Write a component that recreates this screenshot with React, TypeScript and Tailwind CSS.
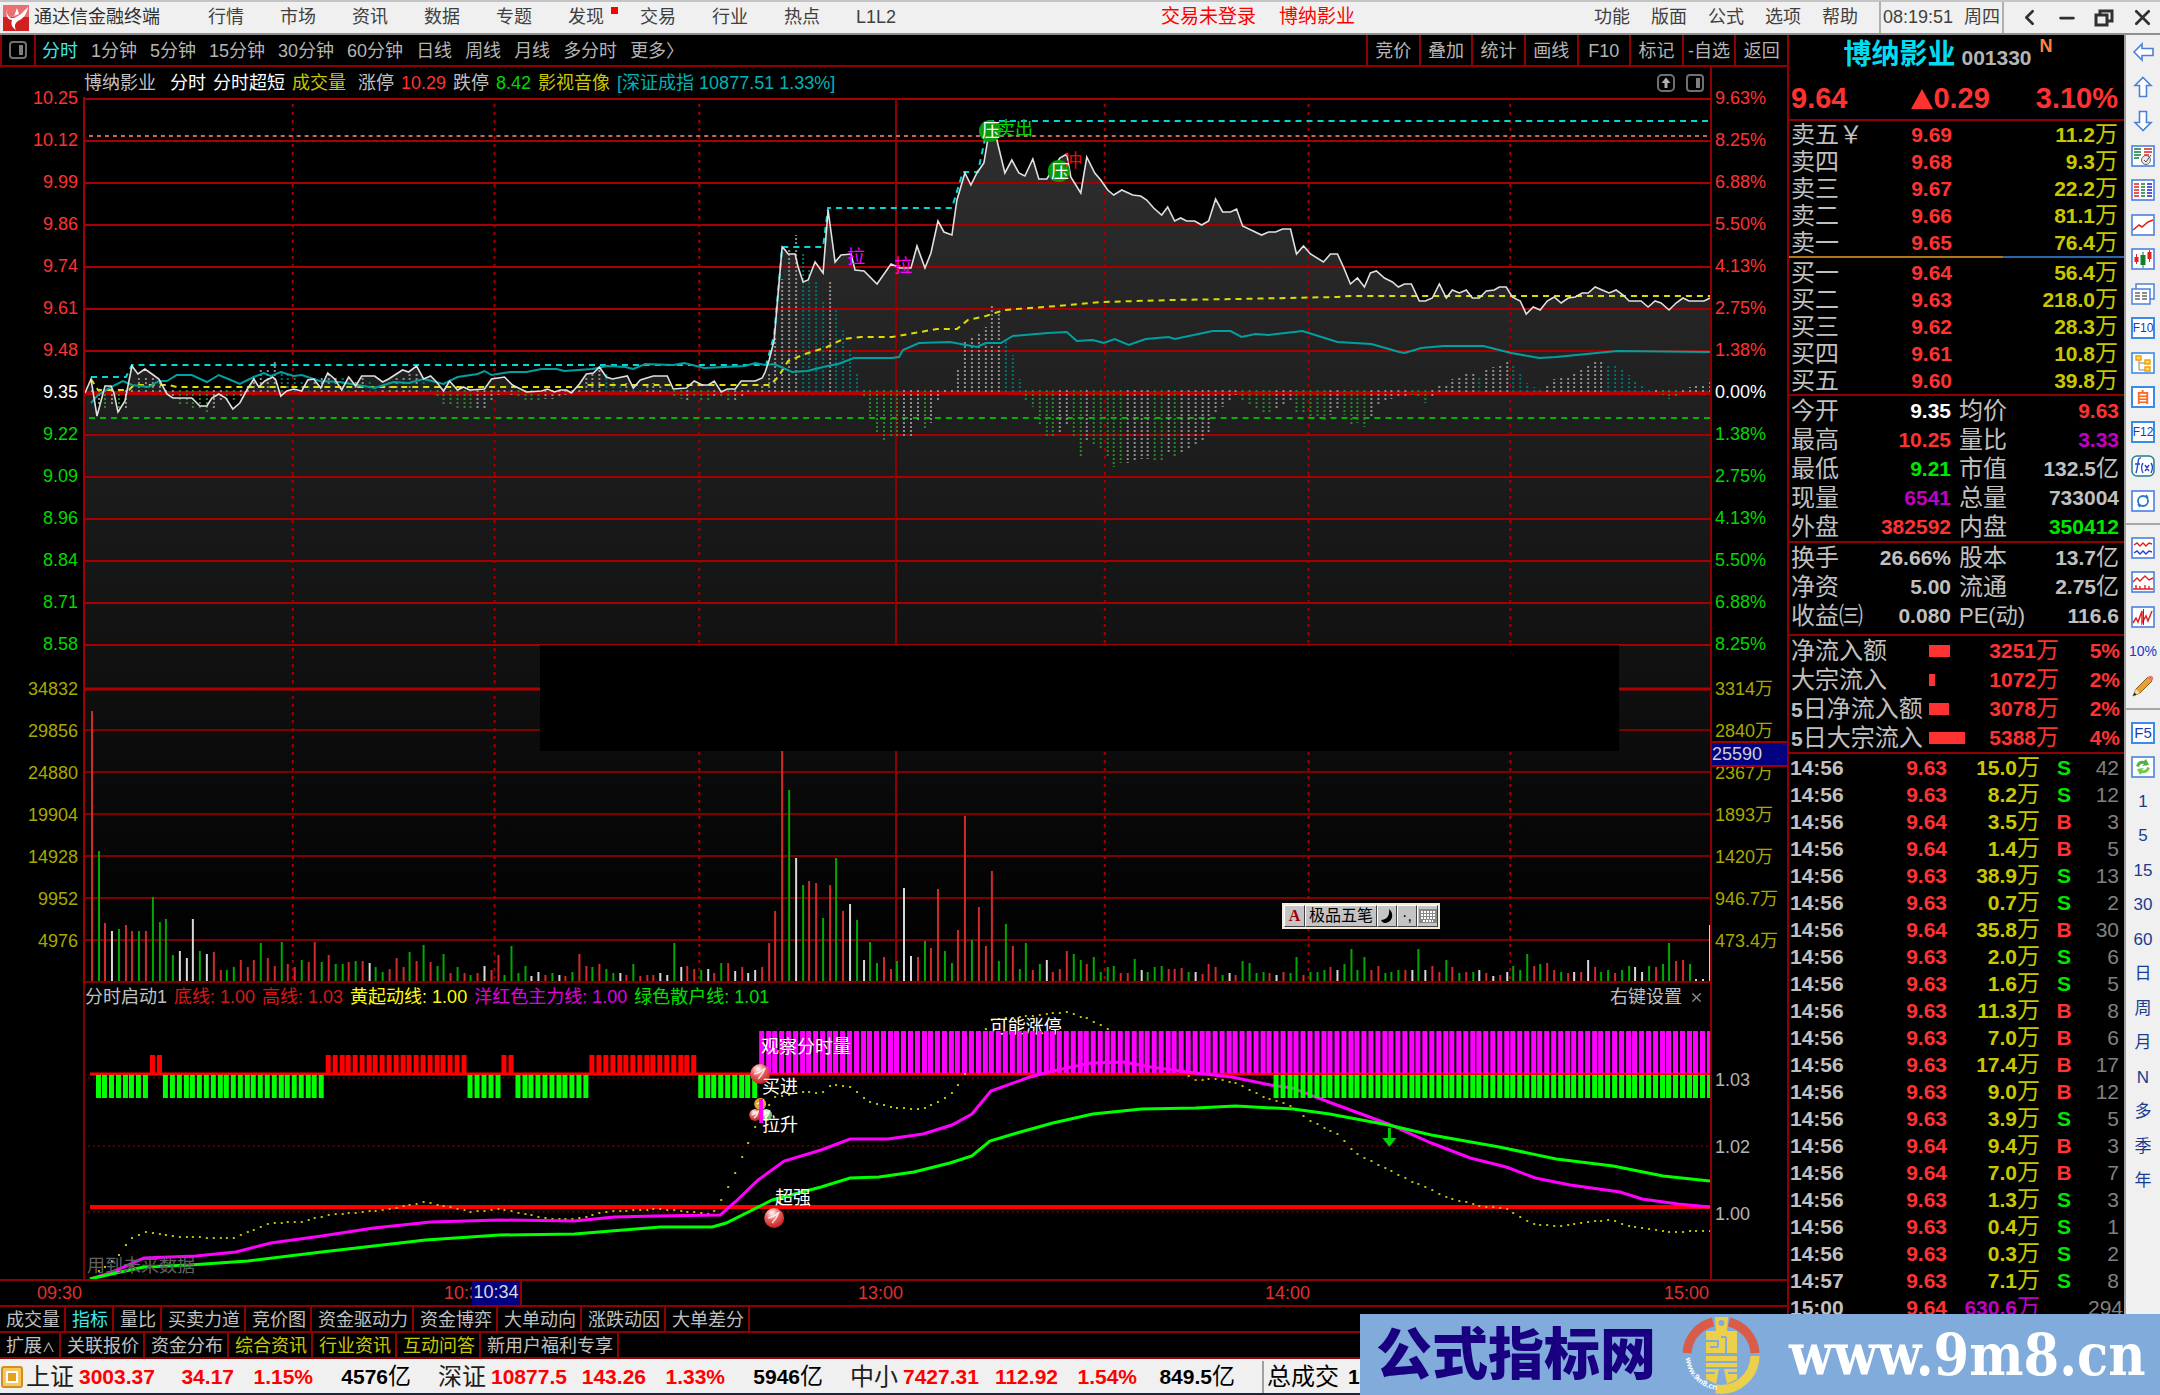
import React from "react";
import { ChevronLeft, Minus, X } from "lucide-react";
import clsx from "clsx";

const menuItems = ["行情", "市场", "资讯", "数据", "专题", "发现", "交易", "行业", "热点", "L1L2"];
const sysItems = ["功能", "版面", "公式", "选项", "帮助"];
const periods = ["分时", "1分钟", "5分钟", "15分钟", "30分钟", "60分钟", "日线", "周线", "月线", "多分时", "更多〉"];
const tools = ["竞价", "叠加", "统计", "画线", "F10", "标记", "-自选", "返回"];

const priceLabels = ["10.25", "10.12", "9.99", "9.86", "9.74", "9.61", "9.48", "9.35", "9.22", "9.09", "8.96", "8.84", "8.71", "8.58"];
const percentLabels = ["9.63%", "8.25%", "6.88%", "5.50%", "4.13%", "2.75%", "1.38%", "0.00%", "1.38%", "2.75%", "4.13%", "5.50%", "6.88%", "8.25%"];
const volumeLabels = ["34832", "29856", "24880", "19904", "14928", "9952", "4976"];
const amountLabels = ["3314万", "2840万", "2367万", "1893万", "1420万", "946.7万", "473.4万"];

const tabs = ["成交量", "指标", "量比", "买卖力道", "竞价图", "资金驱动力", "资金博弈", "大单动向", "涨跌动因", "大单差分"];
const newsTabs = ["扩展∧", "关联报价", "资金分布", "综合资讯", "行业资讯", "互动问答", "新用户福利专享"];

const sells = [["卖五￥", "9.69", "11.2万"], ["卖四", "9.68", "9.3万"], ["卖三", "9.67", "22.2万"], ["卖二", "9.66", "81.1万"], ["卖一", "9.65", "76.4万"]];
const buys = [["买一", "9.64", "56.4万"], ["买二", "9.63", "218.0万"], ["买三", "9.62", "28.3万"], ["买四", "9.61", "10.8万"], ["买五", "9.60", "39.8万"]];

const RED = "text-[#ff3232]";
const GREEN = "text-[#00e600]";
const WHITE = "text-white";
const GRAY = "text-[#c0c0c0]";
const PURPLE = "text-[#c000c0]";

const stats = [
  ["今开", "9.35", WHITE, "均价", "9.63", RED],
  ["最高", "10.25", RED, "量比", "3.33", PURPLE],
  ["最低", "9.21", GREEN, "市值", "132.5亿", GRAY],
  ["现量", "6541", PURPLE, "总量", "733004", GRAY],
  ["外盘", "382592", RED, "内盘", "350412", GREEN],
];
const basics = [
  ["换手", "26.66%", GRAY, "股本", "13.7亿", GRAY],
  ["净资", "5.00", GRAY, "流通", "2.75亿", GRAY],
  ["收益㈢", "0.080", GRAY, "PE(动)", "116.6", GRAY],
];
const flows: [string, number, string, string][] = [
  ["净流入额", 21, "3251万", "5%"],
  ["大宗流入", 6, "1072万", "2%"],
  ["5日净流入额", 20, "3078万", "2%"],
  ["5日大宗流入", 36, "5388万", "4%"],
];
const ticks = [
  ["14:56", "9.63", "15.0万", "S", "42"],
  ["14:56", "9.63", "8.2万", "S", "12"],
  ["14:56", "9.64", "3.5万", "B", "3"],
  ["14:56", "9.64", "1.4万", "B", "5"],
  ["14:56", "9.63", "38.9万", "S", "13"],
  ["14:56", "9.63", "0.7万", "S", "2"],
  ["14:56", "9.64", "35.8万", "B", "30"],
  ["14:56", "9.63", "2.0万", "S", "6"],
  ["14:56", "9.63", "1.6万", "S", "5"],
  ["14:56", "9.63", "11.3万", "B", "8"],
  ["14:56", "9.63", "7.0万", "B", "6"],
  ["14:56", "9.63", "17.4万", "B", "17"],
  ["14:56", "9.63", "9.0万", "B", "12"],
  ["14:56", "9.63", "3.9万", "S", "5"],
  ["14:56", "9.64", "9.4万", "B", "3"],
  ["14:56", "9.64", "7.0万", "B", "7"],
  ["14:56", "9.63", "1.3万", "S", "3"],
  ["14:56", "9.63", "0.4万", "S", "1"],
  ["14:56", "9.63", "0.3万", "S", "2"],
  ["14:57", "9.63", "7.1万", "S", "8"],
  ["15:00", "9.64", "630.6万", "", "294"],
];

const indexes = [
  ["上证", "3003.37", "34.17", "1.15%", "4576亿"],
  ["深证", "10877.5", "143.26", "1.33%", "5946亿"],
  ["中小", "7427.31", "112.92", "1.54%", "849.5亿"],
];

// Intraday series, in plot units (x: 84..1711 for the trading day)
const priceLine =
  "84,393 90,379 96,416 104,386 110,386 113,393 117,412 124,401 131,366 137,374 144,369 151,374 158,379 166,394 172,398 191,398 199,406 206,406 211,398 218,394 225,398 232,409 239,403 246,390 253,379 258,387 264,381 272,377 275,380 280,396 286,391 293,389 301,391 307,380 313,379 320,388 327,373 334,379 341,390 348,377 355,386 361,376 374,376 382,382 388,379 402,370 408,372 416,366 423,379 430,376 436,382 443,391 449,381 457,390 463,387 469,390 484,389 491,379 504,377 512,385 526,392 541,391 547,389 554,392 560,390 566,390 571,393 579,384 586,374 593,373 599,367 606,377 612,379 627,376 633,388 640,380 653,376 667,376 673,389 686,388 694,381 702,385 708,385 714,381 721,392 727,389 735,389 741,381 755,381 762,378 765,372 769,360 774,340 778,293 782,247 785,250 788,254 795,254 798,267 803,282 808,280 815,262 823,273 828,210 835,262 841,255 851,254 855,270 864,271 877,284 891,264 900,268 911,268 917,246 925,268 931,253 938,221 944,232 952,235 957,200 965,173 971,185 977,173 984,163 989,133 993,123 997,140 1005,173 1012,160 1019,173 1025,176 1033,159 1039,179 1047,179 1060,158 1067,154 1071,177 1081,193 1087,157 1095,173 1101,180 1108,190 1114,195 1122,190 1133,195 1141,196 1147,200 1154,208 1162,215 1168,207 1175,221 1181,218 1187,221 1195,221 1202,225 1209,221 1216,199 1223,212 1231,212 1237,209 1243,226 1262,235 1269,232 1276,232 1283,229 1291,229 1297,254 1304,246 1311,254 1324,262 1331,254 1338,254 1344,267 1351,284 1358,278 1365,287 1371,273 1377,271 1385,278 1393,282 1399,287 1405,284 1412,284 1420,301 1426,301 1433,298 1440,284 1447,298 1453,290 1460,293 1467,290 1473,298 1480,298 1487,291 1495,290 1500,287 1507,287 1513,297 1521,301 1527,314 1534,307 1541,310 1548,301 1555,297 1562,303 1569,298 1576,297 1583,293 1589,293 1596,287 1603,290 1610,293 1617,290 1624,295 1630,301 1642,301 1649,307 1656,301 1662,303 1670,310 1677,303 1684,298 1690,301 1705,301 1711,298";
const indexLine =
  "90,403 97,395 110,387 122,381 131,385 148,387 158,381 166,381 176,375 191,375 206,382 218,375 230,380 239,384 253,377 263,373 270,376 280,372 293,376 301,375 319,381 339,382 357,385 374,388 393,382 408,383 423,379 443,384 457,377 477,374 484,371 491,375 510,372 526,372 541,369 556,369 564,371 592,369 607,366 625,367 633,369 645,364 673,365 684,363 704,368 745,366 755,363 765,365 774,364 783,368 792,372 807,371 823,367 838,364 854,358 892,358 899,357 903,350 919,343 950,342 977,347 986,343 1001,343 1013,336 1048,333 1067,332 1077,341 1093,340 1104,343 1115,339 1129,345 1146,339 1169,337 1175,339 1213,331 1231,331 1242,337 1256,334 1269,335 1303,331 1338,342 1372,344 1400,352 1405,353 1422,348 1444,346 1484,346 1512,353 1540,358 1557,357 1618,351 1711,352";
const highLine = "90,377 125,377 131,365 766,365 774,335 782,247 823,247 828,208 952,208 963,172 978,172 989,121 1711,121";
const averageLine =
  "90,379 97,390 128,390 133,385 168,385 176,387 582,387 587,385 770,385 778,377 788,361 805,354 827,347 843,339 861,337 892,337 937,329 957,329 968,320 986,316 1004,310 1057,306 1102,302 1173,300 1236,299 1338,297 1350,296 1711,296";

const mainForceLine =
  "89,1279 109,1273 123,1267 143,1258 195,1256 235,1252 270,1243 321,1236 373,1228 430,1222 499,1220 574,1221 614,1217 654,1216 720,1215 735,1202 758,1180 784,1161 821,1150 850,1139 888,1139 923,1134 952,1125 972,1114 991,1091 1030,1077 1053,1071 1091,1063 1124,1062 1151,1067 1196,1073 1232,1077 1271,1085 1293,1088 1332,1103 1389,1124 1432,1143 1471,1158 1507,1167 1536,1178 1571,1185 1621,1192 1643,1199 1679,1204 1711,1207";
const retailLine =
  "89,1279 115,1273 143,1267 189,1265 247,1261 321,1252 373,1246 425,1240 499,1235 574,1234 660,1227 712,1227 726,1223 772,1200 821,1187 850,1178 879,1177 914,1172 950,1163 972,1156 990,1141 1017,1133 1053,1123 1093,1114 1142,1109 1196,1108 1236,1106 1294,1109 1330,1114 1389,1125 1432,1135 1500,1147 1557,1159 1614,1166 1664,1176 1711,1181";
const startLine =
  "96,1273 117,1256 129,1239 144,1232 178,1237 232,1238 270,1223 299,1222 327,1215 385,1210 425,1202 471,1212 499,1209 551,1219 577,1219 603,1212 660,1209 712,1214 723,1197 735,1173 748,1143 758,1120 775,1097 804,1092 821,1093 832,1085 850,1087 870,1102 896,1108 923,1109 950,1096 964,1076 990,1020 1039,1015 1066,1012 1089,1019 1106,1028 1187,1075 1196,1080 1218,1079 1236,1083 1267,1098 1290,1105 1310,1120 1339,1135 1356,1153 1414,1182 1450,1198 1486,1207 1507,1208 1525,1220 1539,1225 1561,1226 1586,1222 1614,1220 1629,1226 1668,1232 1711,1231";

// One entry per minute: colour letter followed by the bar height
const volumes =
  "r270 g130 r58 w50 g52 r56 r50 g50 r50 g84 g59 g62 g26 w30 w23 w62 g30 w27 r29 r11 g11 g14 r21 r14 r21 g38 r23 r15 g39 r17 r14 g21 r19 r39 g19 r26 g17 g17 r19 g20 r20 w18 g14 g9 r12 r23 r14 g29 r20 g36 r19 g15 g27 r8 g14 r8 g6 r8 w15 r11 r26 g6 g35 g8 g15 w5 w9 r6 g8 w6 r5 g9 r27 r15 g14 r17 g12 g8 w8 r6 g17 r5 r6 r6 w8 w6 g38 w14 r15 r12 g11 w12 r8 g18 r18 w10 r14 w8 w11 r14 r38 r70 r262 g191 w123 g96 r100 r98 g63 r96 g123 r70 w77 g61 w21 g39 g18 r24 r12 g20 w93 w25 r24 g40 r33 r92 g30 g18 r51 r165 g41 r74 r35 r110 g20 g57 r35 g12 g38 r11 g17 w21 r9 r12 r30 g27 g21 r17 g24 g9 g14 g15 r8 r8 g22 w11 g9 g14 g15 r12 r12 r13 g9 w9 r7 r17 r14 g6 w8 r6 g20 g18 g8 g9 r8 w6 r9 g8 g24 r6 g9 g9 g11 r14 w11 g17 g32 g11 g24 r11 r15 g8 g9 g11 r11 w11 g32 w11 r15 r9 g21 r14 g8 r9 g9 w11 r8 w5 r6 w9 g15 g11 g27 r15 g17 r18 r11 g9 r8 w9 r9 w21 r14 g9 g11 r8 g11 g15 w14 w9 g15 r14 g17 g38 r20 r21 g17 w2 w2 w56".split(" ");

const momentum =
  "w2 w-12 g-16 w-12 g-20 w-18 w6 w15 w16 w14 w12 w3 w-4 g-12 g-14 g-16 g-18 g-22 w-16 w-8 g-8 g-10 w-4 w8 w14 w22 w24 w31 c21 c20 c16 c12 c8 w14 w16 w18 w16 c14 c10 w12 w14 c10 c6 w8 w12 w14 w16 w18 w20 c12 c4 g-6 g-14 g-14 g-18 g-18 g-18 w-17 w-16 w-10 w-3 w-2 w-3 g-6 g-8 g-9 g-8 w-7 w-7 w-4 w-3 w2 w6 w14 w18 w22 c18 c16 c8 w9 c5 c3 w6 w9 w8 c3 g-5 g-7 w-8 g-6 g-8 g-8 w-4 g-6 g-8 w-9 w-4 w-2 w3 w8 w18 w55 w113 w143 w157 c138 c122 c111 c91 w112 c84 c63 c43 c18 g-4 g-25 g-42 g-50 g-45 g-45 w-45 w-45 w-30 g-36 w-31 w-8 w-2 w-2 w23 w50 w55 w60 w65 w88 w80 c50 c37 c13 g-10 g-15 g-32 g-44 g-44 w-40 w-34 g-46 g-64 w-50 g-53 g-58 g-65 g-75 g-71 w-71 w-70 w-67 w-67 g-69 g-70 w-62 g-66 w-61 w-58 w-53 w-48 w-41 w-20 w-15 w-9 w-3 g-9 g-14 g-18 g-21 g-20 w-16 w-12 w-8 g-21 g-21 g-26 g-26 g-29 w-23 w-18 g-23 g-32 g-31 g-35 w-25 w-14 w-10 w-7 w-6 w-4 g-3 g-6 g-11 w-6 w7 w8 w13 w16 w18 w18 c16 w22 w25 w28 w30 c27 c20 c9 c5 c2 w7 w13 w14 w16 w20 w24 w26 w30 w30 c28 c26 c22 c17 c10 c8 c3 w-1 g-3 g-7 g-5 w3 w5 w6 w8 w10".split(" ");

const volumeColor: Record<string, string> = { r: "#d22a2a", g: "#00a800", w: "#d8d8d8" };
const momentumColor: Record<string, string> = { w: "#8c8c8c", g: "#2a862a", c: "#007070" };

const minuteX = (i: number) => Math.round(84 + i * 6.779);

// Signal strip: [first minute, last minute]
const redRuns = [[10, 11], [36, 56], [62, 63], [75, 90]];
const greenRuns = [[2, 9], [12, 35], [57, 61], [64, 74], [91, 99], [176, 240]];
const magentaRuns = [[100, 240]];

// Samples a polyline once per minute
function sample(points: string) {
  const pts = points.split(" ").map((p) => p.split(",").map(Number));
  const out: number[][] = [];
  for (let i = 2; i <= 240; i++) {
    const x = minuteX(i);
    const k = pts.findIndex((p) => p[0] >= x);
    if (k < 1) continue;
    const [x0, y0] = pts[k - 1];
    const [x1, y1] = pts[k];
    out.push([x, Math.round(y0 + ((y1 - y0) * (x - x0)) / (x1 - x0))]);
  }
  return out;
}

function Runs({ runs, y, h, color }: { runs: number[][]; y: number; h: number; color: string }) {
  return (
    <g fill={color}>
      {runs.flatMap(([from, to]) =>
        Array.from({ length: to - from + 1 }, (_, k) => (
          <rect key={from + k} x={minuteX(from + k) - 3} y={y} width={5} height={h} />
        ))
      )}
    </g>
  );
}

function PriceChart() {
  const rows = Array.from({ length: 14 }, (_, i) => 98 + i * 42);
  const volRows = Array.from({ length: 6 }, (_, i) => 730 + i * 42);
  return (
    <svg viewBox="84 97 1627 886" preserveAspectRatio="none" className="block h-[886px] w-full">
      <defs>
        <linearGradient id="area" gradientUnits="userSpaceOnUse" x1="0" y1="110" x2="0" y2="960">
          <stop offset="0" stopColor="#303030" />
          <stop offset="0.4" stopColor="#1d1d1d" />
          <stop offset="1" stopColor="#000" />
        </linearGradient>
      </defs>
      <path d={`M84,982 L${priceLine.replace(/ /g, " L")} L1711,982 Z`} fill="url(#area)" />
      <g stroke="#a80000" strokeWidth="2">
        {rows.map((y) => <path key={y} d={`M84,${y + 1}H1711`} />)}
      </g>
      <g stroke="#800000" strokeWidth="2">
        {volRows.map((y) => <path key={y} d={`M84,${y}H1711`} />)}
        <path d="M84,982H1711" />
        <path d="M896,98V982" stroke="#900000" />
      </g>
      <path d="M84,689H1711" stroke="#b00000" strokeWidth="3" />
      <g stroke="#a00000" strokeWidth="2" strokeDasharray="3 5">
        {[292, 494, 699, 1105, 1309, 1511].map((x) => <path key={x} d={`M${x},104V982`} />)}
      </g>
      <path d="M84,393H1711" stroke="#b80000" strokeWidth="4" />
      <path d="M88,136H1711" stroke="#c86464" strokeWidth="2" strokeDasharray="4 4" />
      <path d="M88,418H1711" stroke="#00b400" strokeWidth="2" strokeDasharray="6 5" />
      {momentum.map((m, i) => {
        const h = Number(m.slice(1));
        const x = minuteX(i + 1);
        return (
          <path key={i} d={h > 0 ? `M${x},392V${392 - h}` : `M${x},390V${392 - h}`} stroke={momentumColor[m[0]]} strokeWidth="2" strokeDasharray="2 2" />
        );
      })}
      {volumes.map((v, i) => (
        <path key={i} d={`M${minuteX(i + 1)},981V${981 - Number(v.slice(1))}`} stroke={volumeColor[v[0]]} strokeWidth="2" />
      ))}
      <g fill="none" strokeWidth="2">
        <polyline points={highLine} stroke="#00d8d8" strokeDasharray="6 5" />
        <polyline points={averageLine} stroke="#dcdc00" strokeDasharray="6 5" />
        <polyline points={indexLine} stroke="#00a0a0" />
        <polyline points={priceLine} stroke="#e0e0e0" strokeWidth="1.6" />
      </g>
      <circle cx="990" cy="131" r="11" fill="#0a9a0a" />
      <circle cx="1059" cy="171" r="11" fill="#0a9a0a" />
    </svg>
  );
}

function Ball({ cx, cy, r, fill }: { cx: number; cy: number; r: number; fill: string }) {
  return (
    <g>
      <circle cx={cx} cy={cy} r={r} fill={fill} />
      <path d={`M${cx - r * 0.6},${cy} Q${cx},${cy - 1} ${cx + r * 0.5},${cy - r * 0.6} Q${cx + 2},${cy + 1} ${cx - r * 0.2},${cy + r * 0.5}`} fill="none" stroke="#fff" strokeWidth="1.5" opacity="0.8" />
    </g>
  );
}

function SignalChart() {
  return (
    <svg viewBox="84 1010 1627 269" preserveAspectRatio="none" className="block h-[269px] w-full">
      <defs>
        <radialGradient id="ballRed" cx="0.4" cy="0.25" r="0.8">
          <stop offset="0" stopColor="#fff" />
          <stop offset="0.45" stopColor="#e86060" />
          <stop offset="1" stopColor="#c01818" />
        </radialGradient>
        <radialGradient id="ballGreen" cx="0.4" cy="0.25" r="0.8">
          <stop offset="0" stopColor="#fff" />
          <stop offset="1" stopColor="#3aa020" />
        </radialGradient>
      </defs>
      <g stroke="#a00000" strokeDasharray="2 3">
        <path d="M87,1078H1711M87,1146H1711M87,1212H1711" />
      </g>
      <path d="M89,1074H1711" stroke="#f00" strokeWidth="3" />
      <path d="M89,1207H1711" stroke="#f00" strokeWidth="4" />
      <g fill="#c0c000">
        {sample(startLine).map(([x, y]) => <rect key={x} x={x - 1} y={y - 1} width="2" height="2" />)}
      </g>
      <polyline points={mainForceLine} fill="none" stroke="#f0f" strokeWidth="3" />
      <text x="990" y="1033" fill="#fff" fontSize="18">可能涨停</text>
      <Runs runs={redRuns} y={1055} h={18} color="#f00" />
      <Runs runs={greenRuns} y={1075} h={23} color="#0f0" />
      <Runs runs={magentaRuns} y={1031} h={42} color="#f0f" />
      <polyline points={retailLine} fill="none" stroke="#0f0" strokeWidth="3" />
      <path d="M1390,1128V1140" stroke="#00d000" strokeWidth="3" />
      <path d="M1383,1138H1397L1390,1147Z" fill="#00d000" />
      <Ball cx={760} cy={1104} r={6} fill="#e0a830" />
      <Ball cx={755} cy={1115} r={6} fill="url(#ballRed)" />
      <Ball cx={766} cy={1115} r={6} fill="url(#ballGreen)" />
      <path d="M761,1099V1123" stroke="#f0f" strokeWidth="4" />
      <Ball cx={760} cy={1074} r={10} fill="url(#ballRed)" />
      <Ball cx={774} cy={1218} r={10} fill="url(#ballRed)" />
    </svg>
  );
}

function Note({ className, children }: { className: string; children: React.ReactNode }) {
  return <span className={clsx("absolute whitespace-nowrap text-[18px] leading-[20px]", className)}>{children}</span>;
}

function PanelIcon() {
  return (
    <svg width="18" height="18" viewBox="0 0 18 18" fill="none">
      <rect x="1" y="1" width="16" height="16" rx="3" stroke="#707070" strokeWidth="2" />
      <rect x="10" y="4" width="4" height="10" fill="#808080" />
    </svg>
  );
}

function InputBar() {
  const cell = "flex items-center justify-center border-r border-b border-r-[#404040] border-b-[#404040] border-t border-l border-t-white border-l-white bg-[#c4c4c4]";
  return (
    <div className="absolute top-[806px] left-[1197px] flex h-[26px] w-[158px] border-2 border-[#f0ece0] bg-[#c4c4c4] text-[16px] leading-none text-black">
      <span className={clsx(cell, "w-[21px] font-['Liberation_Serif'] font-bold text-[#a00000]")}>A</span>
      <span className={clsx(cell, "w-[72px]")}>极品五笔</span>
      <span className={clsx(cell, "w-5")}>
        <svg width="12" height="14" viewBox="0 0 12 14"><path d="M8 0C14 5 11 14 4 14C2 14 1 13 0 11C6 11 9 6 8 0Z" fill="#000" /></svg>
      </span>
      <span className={clsx(cell, "w-5")}>·,</span>
      <span className={clsx(cell, "flex-1")}>
        <svg width="18" height="14" viewBox="0 0 18 14"><rect width="18" height="14" fill="#888" /><path d="M2 3H16M2 6H16M2 9H16M4 12H14" stroke="#fff" strokeWidth="2" strokeDasharray="2 1" /></svg>
      </span>
    </div>
  );
}

function axisColor(i: number) {
  if (i === 7) return "text-white";
  return i < 7 ? "text-[#ff3232]" : "text-[#00d800]";
}

function ChartArea() {
  return (
    <div className="grid grid-cols-[83px_minmax(0,1fr)_77px] text-[18px]">
      {/* Price axis */}
      <div className="pt-[10px] pr-[5px] text-right">
        {priceLabels.map((t, i) => <div key={t} className={clsx("h-[42px] leading-[42px]", axisColor(i))}>{t}</div>)}
        <div className="mt-[3px]">
          {volumeLabels.map((t) => <div key={t} className="h-[42px] leading-[42px] text-[#a8a800]">{t}</div>)}
        </div>
      </div>

      {/* Plots */}
      <div className="relative">
        <div className="flex h-[30px] items-center gap-[7px] whitespace-nowrap pl-px pt-[2px] text-[#c0c0c0]">
          <span className="mr-[7px]">博纳影业</span>
          <span className="text-white">分时</span>
          <span className="text-white">分时超短</span>
          <span className="mr-[5px] text-[#c8c800]">成交量</span>
          <span>涨停</span>
          <span className="text-[#ff3232]">10.29</span>
          <span>跌停</span>
          <span className="text-[#00d800]">8.42</span>
          <span className="text-[#c8c800]">影视音像</span>
          <span className="text-[#00b4b4]">[深证成指 10877.51 1.33%]</span>
          <span className="mr-[6px] ml-auto flex gap-[11px]">
            <svg width="18" height="18" viewBox="0 0 18 18" fill="none">
              <rect x="1" y="1" width="16" height="16" rx="4" stroke="#707070" strokeWidth="2" />
              <path d="M9 3.500L13.500 9H10.500V14H7.500V9H4.500Z" fill="#b0b0b0" />
            </svg>
            <PanelIcon />
          </span>
        </div>
        <div className="relative border-l-2 border-[#a00000]">
          <PriceChart />
          <Note className="top-[150px] left-[762px] text-[#f0f]">拉</Note>
          <Note className="top-[159px] left-[809px] text-[#f0f]">拉</Note>
          <Note className="top-[22px] left-[912px] text-[#00d800]">卖出</Note>
          <Note className="top-[24px] left-[897px] text-white">压</Note>
          <Note className="top-[54px] left-[979px] text-[#f00]">冲</Note>
          <Note className="top-[65px] left-[966px] text-white">压</Note>
          <div className="absolute top-[548px] left-[28%] h-[106px] w-[66.400%] bg-black" />
          <InputBar />
        </div>
        <div className="relative border-l-2 border-[#800000]">
          <div className="flex h-[27px] items-center gap-[7px] whitespace-nowrap pt-[2px] text-[#c0c0c0]">
            <span>分时启动1</span>
            <span className="text-[#d81818]">底线: 1.00</span>
            <span className="text-[#d81818]">高线: 1.03</span>
            <span className="text-[#ffff00]">黄起动线: 1.00</span>
            <span className="text-[#e000e0]">洋红色主力线: 1.00</span>
            <span className="text-[#00e000]">绿色散户线: 1.01</span>
            <span className="ml-auto">右键设置</span>
            <button className="mr-[6px] text-[#909090]" aria-label="关闭"><X size={15} strokeWidth={2} /></button>
          </div>
          <SignalChart />
          <Note className="top-[54px] left-[676px] text-white">观察分时量</Note>
          <Note className="top-[94px] left-[677px] text-white">买进</Note>
          <Note className="top-[132px] left-[677px] text-white">拉升</Note>
          <Note className="top-[205px] left-[690px] text-white">超强</Note>
          <Note className="top-[273px] left-[2px] text-[#606060]">用到未来数据</Note>
        </div>
      </div>

      {/* Percent axis */}
      <div className="relative border-l-2 border-[#900000] pt-[10px] pl-[3px]">
        {percentLabels.map((t, i) => <div key={i} className={clsx("h-[42px] leading-[42px]", axisColor(i))}>{t}</div>)}
        <div className="mt-[3px]">
          {amountLabels.map((t) => <div key={t} className="h-[42px] leading-[42px] text-[#a8a800]">{t}</div>)}
        </div>
        <div className="mt-[105px] text-[#b4b4b4]">
          {["1.03", "1.02", "1.00"].map((t) => <div key={t} className="mb-[40px] h-[27px] leading-[27px]">{t}</div>)}
        </div>
        <div className="absolute top-[674px] left-0 h-[26px] w-full border-y-2 border-[#a00000] bg-[#000080] leading-[22px] text-[#d0d0d0]">25590</div>
      </div>
    </div>
  );
}

function TabRow({ items, kind }: { items: string[]; kind: "indicator" | "news" }) {
  return (
    <div className="flex h-[26px] border-b-2 border-[#900000] text-[18px] text-[#c0c0c0]">
      {items.map((t, i) => (
        <button
          key={t}
          className={clsx(
            "h-full whitespace-nowrap border-r-2 border-[#900000] pr-[4px] pl-[6px] leading-[26px]",
            kind === "indicator" && i === 1 && "text-[#40e8e8]",
            kind === "news" && i >= 3 && i <= 5 && "text-[#c8c800]"
          )}
        >
          {t.replace("∧", "")}
          {t.endsWith("∧") && <span className="text-[13px]">∧</span>}
        </button>
      ))}
    </div>
  );
}

function LevelTable({ rows }: { rows: string[][] }) {
  return (
    <table className="w-full table-fixed">
      <tbody>
        {rows.map(([name, price, vol]) => (
          <tr key={name} className="h-[27px] leading-[27px]">
            <td className="w-[92px] p-0 pl-[2px] text-[24px] text-[#c0c0c0]">{name}</td>
            <td className="w-[71px] p-0 text-right font-bold text-[#ff3232]">{price}</td>
            <td className="p-0 pr-[6px] text-right font-bold text-[#c8c800]"><Amount value={vol} /></td>
          </tr>
        ))}
      </tbody>
    </table>
  );
}

// Digits are bold, the trailing unit is larger and regular
function Amount({ value }: { value: string }) {
  const unit = value.match(/[万亿]$/)?.[0] ?? "";
  return (
    <>
      {value.slice(0, value.length - unit.length)}
      {unit && <span className="text-[23px] font-normal leading-none">{unit}</span>}
    </>
  );
}

function StatTable({ rows }: { rows: string[][] }) {
  return (
    <table className="w-full table-fixed">
      <tbody>
        {rows.map((r) => (
          <tr key={r[0]} className="h-[29px] leading-[29px]">
            <td className="w-[76px] whitespace-nowrap p-0 pl-[2px] text-[24px] text-[#c0c0c0]">{r[0]}</td>
            <td className={clsx("w-[86px] p-0 text-right font-bold", r[2])}>{r[1]}</td>
            <td className={clsx("w-[74px] whitespace-nowrap p-0 pl-[8px] text-[#c0c0c0]", r[3].startsWith("PE") ? "text-[22px]" : "text-[24px]")}>{r[3]}</td>
            <td className={clsx("p-0 pr-[5px] text-right font-bold", r[5])}><Amount value={r[4]} /></td>
          </tr>
        ))}
      </tbody>
    </table>
  );
}

function QuotePanel() {
  return (
    <aside className="w-[337px] shrink-0 border-l-2 border-[#900000] text-[21px]">
      <div className="h-[84px]">
        <div className="flex h-[40px] items-center justify-center pr-[17px]">
          <h1 className="text-[28px] font-bold leading-[38px] text-[#00dcf0]">博纳影业</h1>
          <span className="pt-[6px] pl-[6px] font-bold text-[#b4b4b4]">001330</span>
          <sup className="ml-[8px] text-[18px] font-bold text-[#ff8040]">N</sup>
        </div>
        <div className="flex h-[44px] items-center justify-between pt-[3px] pr-[6px] pl-[2px] text-[29px] font-bold text-[#ff3232]">
          <span>9.64</span>
          <span className="flex items-center pl-[18px]">
            <svg width="22" height="20" viewBox="0 0 22 20"><path d="M11 0L22 20H0Z" fill="#ff3232" /></svg>
            0.29
          </span>
          <span>3.10%</span>
        </div>
      </div>
      <div className="border-t-2 border-[#900000]">
        <LevelTable rows={sells} />
      </div>
      <div className="flex h-[2px]">
        <div className="w-[64%] bg-[#b07818]" />
        <div className="flex-1 bg-[#2868a8]" />
      </div>
      <div className="pt-px"><LevelTable rows={buys} /></div>
      <div className="border-t-2 border-[#900000]"><StatTable rows={stats} /></div>
      <div className="border-t-2 border-[#900000] pb-[4px]"><StatTable rows={basics} /></div>
      <div className="border-t-2 border-[#900000]">
        <table className="w-full table-fixed">
          <tbody>
            {flows.map(([name, w, amount, pct]) => (
              <tr key={name} className="h-[29px] leading-[28px] text-[#ff3232]">
                <td className="w-[140px] whitespace-nowrap p-0 pl-[2px] text-[24px] text-[#c0c0c0]">
                  {name.startsWith("5") && <b className="text-[21px] leading-none">5</b>}
                  {name.replace("5", "")}
                </td>
                <td className="w-[38px] p-0"><div className="h-[12px] bg-[#ff3232]" style={{ width: w }} /></td>
                <td className="w-[92px] p-0 text-right font-bold"><Amount value={amount} /></td>
                <td className="p-0 pr-[4px] text-right font-bold">{pct}</td>
              </tr>
            ))}
          </tbody>
        </table>
      </div>
      <div className="border-t-2 border-[#900000]">
        <table className="w-full table-fixed font-bold">
          <tbody>
            {ticks.map(([time, price, vol, side, count], i) => (
              <tr key={i} className="h-[27px] leading-[27px]">
                <td className="w-[70px] p-0 pl-px text-[#c0c0c0]">{time}</td>
                <td className="w-[88px] p-0 text-right text-[#ff3232]">{price}</td>
                <td className={clsx("w-[93px] p-0 text-right", side ? "text-[#c8c800]" : "text-[#c000c0]")}><Amount value={vol} /></td>
                <td className={clsx("w-[48px] p-0 text-center", side === "S" ? "text-[#00e600]" : "text-[#ff3232]")}>{side}</td>
                <td className="p-0 pr-[5px] text-right font-normal text-[#808080]">{count}</td>
              </tr>
            ))}
          </tbody>
        </table>
      </div>
    </aside>
  );
}

function Box({ children, stroke = "#4a80e0" }: { children?: React.ReactNode; stroke?: string }) {
  return (
    <svg width="24" height="22" viewBox="0 0 24 22" fill="none">
      <rect x="1" y="1" width="22" height="20" fill="#fff" stroke={stroke} strokeWidth="1.6" />
      {children}
    </svg>
  );
}

function TextBox({ children, className }: { children: string; className?: string }) {
  return (
    <span className={clsx("flex h-[22px] w-[24px] items-center justify-center border-2 border-[#3a8ce8] bg-white leading-none", className ?? "text-[12px] text-[#1838c0]")}>
      {children}
    </span>
  );
}

const arrow = "M2 10L10 2V6.500H21V13.500H10V18Z";

const stripIcons: (React.ReactNode | null)[] = [
  <svg width="23" height="20" viewBox="0 0 23 20"><path d={arrow} fill="#fff" stroke="#4a80d8" strokeWidth="1.6" /></svg>,
  <svg width="20" height="24" viewBox="0 0 20 23"><path transform="translate(20 0) rotate(90)" d={arrow} fill="#fff" stroke="#4a80d8" strokeWidth="1.6" /></svg>,
  <svg width="20" height="24" viewBox="0 0 20 23"><path transform="translate(0 23) rotate(-90)" d={arrow} fill="#fff" stroke="#4a80d8" strokeWidth="1.6" /></svg>,
  <Box>
    <path d="M3 4H10M3 7H10M3 10H10M3 13H8" stroke="#108030" strokeWidth="1.500" />
    <path d="M13 4H21M13 7H21M13 10H18" stroke="#e02020" strokeWidth="1.500" />
    <circle cx="15" cy="15" r="4.500" fill="#e8e8e8" stroke="#666" /><path d="M13 15L15 17L20 10" stroke="#555" />
  </Box>,
  <Box>
    <path d="M3 5H8M3 8H8M3 11H8M3 14H8M3 17H8" stroke="#e02020" strokeWidth="1.500" />
    <path d="M10 5H14M10 8H14M10 11H14M10 14H14M10 17H14" stroke="#108030" strokeWidth="1.500" />
    <path d="M16 5H21M16 8H21M16 11H21M16 14H21M16 17H21" stroke="#2020d0" strokeWidth="1.500" />
  </Box>,
  <Box><path d="M2 16L8 11L11 13L17 8L22 6" stroke="#e02020" strokeWidth="1.600" /></Box>,
  <Box>
    <path d="M5.500 6V16M18.500 2V14" stroke="#e02020" /><path d="M12 4V20" stroke="#108030" />
    <path d="M3.500 9H7.500V14H3.500ZM16.500 4H20.500V11H16.500Z" fill="#e02020" /><path d="M9.500 7H14.500V17H9.500Z" fill="#108030" />
  </Box>,
  <svg width="24" height="22" viewBox="0 0 24 22" fill="none">
    <rect x="5" y="1" width="18" height="15" fill="#fff" stroke="#4a80e0" strokeWidth="1.500" />
    <rect x="1" y="6" width="18" height="15" fill="#fff" stroke="#4a80e0" strokeWidth="1.500" />
    <path d="M4 10H9M4 13H9M4 16H9M11 10H16M11 13H16M11 16H16" stroke="#666" strokeWidth="1.500" />
  </svg>,
  <TextBox>F10</TextBox>,
  <Box stroke="#3a8ce8">
    <path d="M8 7V18H14M8 11H14" stroke="#888" />
    <path d="M5 4H10V8H5ZM14 8H19V12H14ZM14 15H19V19H14Z" fill="#ffe060" stroke="#f0a000" strokeWidth="1.400" />
  </Box>,
  <TextBox className="text-[14px] font-bold text-[#ff6820]">自</TextBox>,
  <TextBox>F12</TextBox>,
  <svg width="24" height="24" viewBox="0 0 24 24" fill="none">
    <rect x="1" y="2" width="22" height="20" rx="5" fill="#fff" stroke="#20808c" strokeWidth="1.500" />
    <path d="M10 4C6 3 8 10 5 19M4 10H9M12 9C10 12 10 15 12 19M20 9C22 12 22 15 20 19M14 11L18 17M18 11L14 17" stroke="#2848c8" strokeWidth="1.400" />
  </svg>,
  <Box><circle cx="12" cy="11" r="5" stroke="#2878d0" strokeWidth="1.800" /><path d="M15 5L17 8M7 14L9 17" stroke="#2878d0" strokeWidth="1.600" /></Box>,
  null,
  <Box>
    <path d="M3 8L6 6L9 9L12 6L15 9L18 6L21 7" stroke="#e02020" strokeWidth="1.400" />
    <path d="M3 16L6 14L9 17L12 14L15 17L18 14L21 15" stroke="#2040d0" strokeWidth="1.400" />
  </Box>,
  <Box>
    <path d="M2 11L6 7L9 10L14 5L18 9L22 7" stroke="#e02020" strokeWidth="1.400" />
    <path d="M2 18H22M5 18V14M9 18V15M14 18V14M18 18V15" stroke="#e02020" strokeWidth="1.400" />
  </Box>,
  <Box><path d="M2 17L5 12L7 16L11 5V17L15 10L17 15L21 5" stroke="#e02020" strokeWidth="1.500" /><path d="M12.500 3V19" stroke="#2040d0" /></Box>,
  <span className="text-[14px] text-[#1838c8]">10%</span>,
  <svg width="24" height="24" viewBox="0 0 24 24">
    <path d="M2 22L5 15L17 3L21 7L9 19Z" fill="#e8a030" stroke="#806020" />
    <path d="M16 4L18 2Q20 1 22 3Q23 5 21 7Z" fill="#e87878" /><path d="M2 22L5 15L9 19Z" fill="#f0d8a0" /><path d="M2 22L3.500 18.500L5.500 20.500Z" fill="#222" />
  </svg>,
  null,
  <TextBox className="text-[15px] text-[#1838c0]">F5</TextBox>,
  <Box>
    <path d="M5 10Q7 4 13 5L15 3L18 9L11 10L13 8Q9 7 8 11Z" fill="#50b040" />
    <path d="M19 12Q17 18 11 17L9 19L6 13L13 12L11 14Q15 15 16 11Z" fill="#70c850" />
  </Box>,
  "1", "5", "15", "30", "60", "日", "周", "月", "N", "多", "季", "年",
];

function ToolStrip() {
  return (
    <nav className="flex w-[36px] shrink-0 flex-col items-center border-l-2 border-[#a0a0a0] bg-[#f0f0f0] text-[17px] text-[#183c90]">
      {stripIcons.map((icon, i) =>
        icon === null ? (
          <div key={i} className="flex h-[12px] w-full items-center"><div className="h-[2px] w-full bg-[#a8a8a8]" /></div>
        ) : (
          <button key={i} className="flex h-[34px] w-full shrink-0 items-center justify-center even:h-[35px]">{icon}</button>
        )
      )}
    </nav>
  );
}

function TitleBar() {
  return (
    <header className="flex h-[35px] items-center border-y-2 border-t-[#c4c4c4] border-b-[#909090] bg-[#f0f0f0] text-[18px] text-[#404040]">
      <svg width="26" height="26" viewBox="0 0 26 26" className="ml-[3px] shrink-0">
        <rect width="26" height="26" fill="#d02020" />
        <rect width="26" height="12" fill="#e87070" />
        <path d="M5 2C3 7 4 12 9 13C15 13 20 7 25 2C24 9 20 14 15 16C12 18 11 21 13 25C8 22 8 18 9 15C4 15 2 9 5 2Z" fill="#fff" />
        <path d="M8 12C12 12 12 8 14 3L16 9Z" fill="#fff" />
      </svg>
      <span className="ml-[5px] w-[174px] text-[#303030]">通达信金融终端</span>
      <nav className="flex">
        {menuItems.map((t) => (
          <button key={t} className="relative w-[72px] text-left">
            {t}
            {t === "发现" && <span className="absolute top-[3px] left-[43px] h-[7px] w-[7px] bg-[#f00]" />}
          </button>
        ))}
      </nav>
      <div className="flex flex-1 justify-center gap-[23px] pr-[6px] text-[19px] text-[#f00]">
        <button>交易未登录</button>
        <button>博纳影业</button>
      </div>
      <nav className="flex">
        {sysItems.map((t) => <button key={t} className="w-[57px] text-left">{t}</button>)}
      </nav>
      <div className="flex h-full items-center gap-[11px] border-x-2 border-[#b0b0b0] px-[2px]">
        <time>08:19:51</time>
        <span>周四</span>
      </div>
      <div className="flex items-center gap-[14px] pr-[5px] pl-[13px] text-[#303030]">
        <button aria-label="收起"><ChevronLeft size={25} strokeWidth={2.5} /></button>
        <button aria-label="最小化"><Minus size={22} strokeWidth={3} /></button>
        <button aria-label="还原" className="px-[2px]">
          <svg width="20" height="18" viewBox="0 0 20 18" fill="none" stroke="#303030" strokeWidth="3">
            <path d="M6 5V2H18V12H14" /><rect x="2" y="6" width="11" height="10" />
          </svg>
        </button>
        <button aria-label="关闭"><X size={25} strokeWidth={2.5} /></button>
      </div>
    </header>
  );
}

function StatusBar() {
  return (
    <footer className="flex h-[36px] items-center overflow-hidden whitespace-nowrap border-b-2 border-[#182838] bg-[#f0f0f0] pt-[2px] text-[21px] text-black">
      <svg width="22" height="22" viewBox="0 0 22 22" className="mr-[3px] ml-px shrink-0">
        <rect x="1" y="1" width="20" height="20" rx="2" fill="#f8c860" stroke="#d09020" strokeWidth="2" />
        <rect x="6" y="6" width="10" height="10" fill="#e8a020" stroke="#fff" strokeWidth="2" />
      </svg>
      {indexes.map(([name, price, change, pct, amount]) => (
        <div key={name} className="flex w-[412px] shrink-0 items-center font-bold text-[#f00]">
          <span className="w-[53px] text-[24px] font-normal text-[#202020]">{name}</span>
          <span className="w-[82px]">{price}</span>
          <span className="w-[73px] text-right">{change}</span>
          <span className="w-[79px] text-right">{pct}</span>
          <span className="w-[98px] text-right text-black"><Amount value={amount} /></span>
        </div>
      ))}
      <span className="flex h-full items-center border-l-2 border-[#a0a0a0] pl-[3px] text-[24px]">总成交</span>
      <span className="pl-[9px] font-bold">1</span>
    </footer>
  );
}

function SiteBanner() {
  return (
    <a href="#home" className="absolute right-0 bottom-0 flex h-[81px] w-[800px] items-center overflow-hidden whitespace-nowrap bg-[#80abda]">
      <span className="w-[322px] pl-[16px] text-[56px] font-black leading-none text-[#180080]">公式指标网</span>
      <svg width="78" height="78" viewBox="0 0 78 78" className="shrink-0" fill="none">
        <path d="M5 37A34 34 0 0 1 31 6M47 6A34 34 0 0 1 73 37" stroke="#d85c48" strokeWidth="9" />
        <path d="M73 40A34 34 0 0 1 34 73" stroke="#ecd04c" strokeWidth="9" />
        <path d="M33 1H46L45 15H55V37H24V15H34Z" fill="#ecd04c" />
        <circle cx="39.500" cy="7" r="3" fill="#80abda" />
        <path d="M24 25H36V31M28 31H36M44 21V37M39 21H44" stroke="#80abda" strokeWidth="2" />
        <path d="M24 40H55V45H24ZM24 47H55V51H24ZM24 53H37L34 68L24 63ZM42 53H55V63L45 68Z" fill="#ecd04c" />
        <path d="M24 57H33M46 57H55" stroke="#80abda" strokeWidth="2" />
        <path id="rim" d="M4 42A34 34 0 0 0 36 74" />
        <text fontSize="8" fontWeight="bold" fill="#fff"><textPath href="#rim">www.9m8.cn</textPath></text>
      </svg>
      <span className="ml-[29px] font-['DejaVu_Serif_Condensed','DejaVu_Serif',serif] text-[57px] font-bold leading-none text-white">www.9m8.cn</span>
    </a>
  );
}

export default function App() {
  return (
    <div className="relative flex min-h-screen w-full flex-col overflow-hidden bg-black font-['Liberation_Sans','Noto_Sans_CJK_SC',sans-serif]">
      <TitleBar />

      <div className="flex h-[1324px]">
        <main className="flex min-w-0 flex-1 flex-col">
          {/* Period toolbar */}
          <div className="flex h-[33px] items-stretch border-b-2 border-[#900000] text-[18px] text-[#b4b4b4]">
            <button className="flex w-[36px] items-center justify-center border-x-2 border-[#900000]" aria-label="侧栏"><PanelIcon /></button>
            <div className="flex items-center gap-[13px] pt-[3px] pl-[6px]">
              {periods.map((t, i) => <button key={t} className={clsx("whitespace-nowrap", i === 0 && "text-[#40e8e8]")}>{t}</button>)}
            </div>
            <div className="ml-auto grid w-[421px] grid-cols-8">
              {tools.map((t) => <button key={t} className="whitespace-nowrap border-l-2 border-[#900000] pt-[3px]">{t}</button>)}
            </div>
          </div>

          <ChartArea />

          {/* Time axis */}
          <div className="relative flex h-[28px] border-y-2 border-[#900000] text-right text-[18px] leading-[25px] text-[#e03030]">
            <span className="w-[82px]">09:30</span>
            <span className="flex-[407]">10:30</span>
            <span className="flex-[414]">13:00</span>
            <span className="flex-[407]">14:00</span>
            <span className="flex-[399]">15:00</span>
            <span className="w-[78px]" />
            <span className="absolute top-0 left-[472px] h-[24px] w-[50px] border-r-2 border-[#900000] bg-[#000080] text-center leading-[22px] text-[#d8d8d8]">10:34</span>
          </div>

          <TabRow items={tabs} kind="indicator" />
          <TabRow items={newsTabs} kind="news" />
        </main>

        <QuotePanel />
        <ToolStrip />
      </div>

      <StatusBar />
      <SiteBanner />
    </div>
  );
}
